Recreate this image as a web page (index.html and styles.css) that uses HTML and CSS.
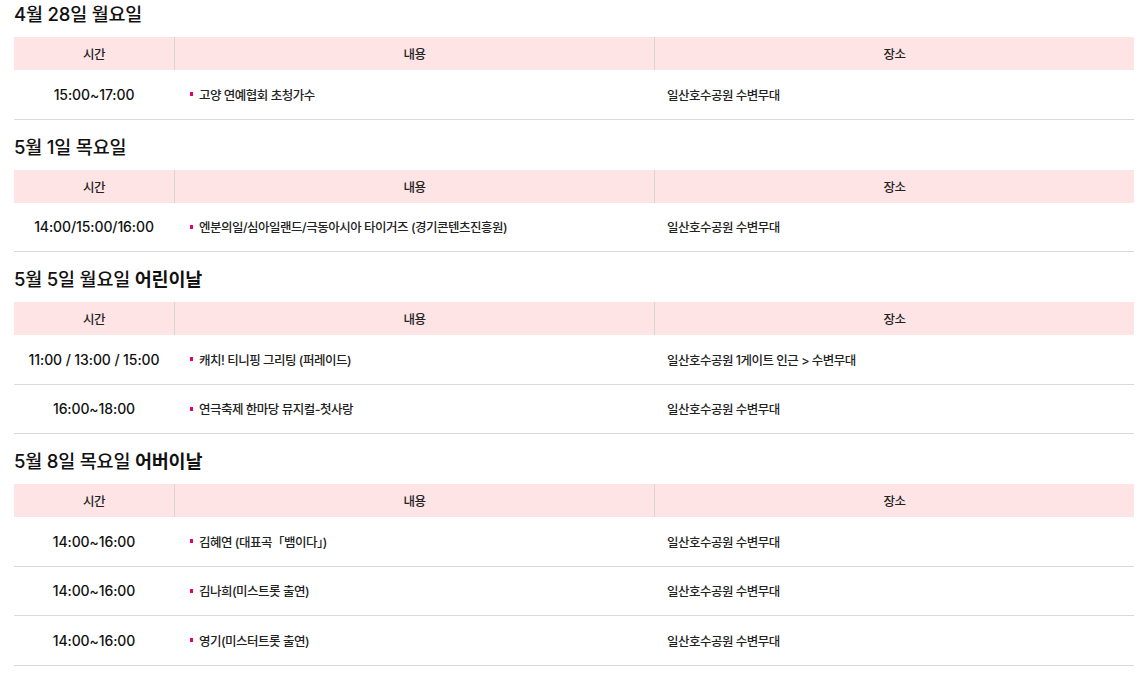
FILE: index.html
```html
<!DOCTYPE html>
<html lang="ko">
<head>
<meta charset="utf-8">
<title>일정</title>
<link rel="stylesheet" href="styles.css">
</head>
<body>
<div class="page">
  <section class="day">
    <h3 class="day-title">4월 28일 월요일</h3>
    <div class="sched">
      <div class="row head"><div class="c">시간</div><div class="c">내용</div><div class="c">장소</div></div>
      <div class="row"><div class="c time">15:00~17:00</div><div class="c what"><span class="dot"></span>고양 연예협회 초청가수</div><div class="c where">일산호수공원 수변무대</div></div>
    </div>
  </section>
  <section class="day">
    <h3 class="day-title">5월 1일 목요일</h3>
    <div class="sched">
      <div class="row head"><div class="c">시간</div><div class="c">내용</div><div class="c">장소</div></div>
      <div class="row"><div class="c time">14:00/15:00/16:00</div><div class="c what"><span class="dot"></span>엔분의일/심아일랜드/극동아시아 타이거즈 (경기콘텐츠진흥원)</div><div class="c where">일산호수공원 수변무대</div></div>
    </div>
  </section>
  <section class="day">
    <h3 class="day-title">5월 5일 월요일 <b>어린이날</b></h3>
    <div class="sched">
      <div class="row head"><div class="c">시간</div><div class="c">내용</div><div class="c">장소</div></div>
      <div class="row"><div class="c time">11:00 / 13:00 / 15:00</div><div class="c what"><span class="dot"></span>캐치! 티니핑 그리팅 (퍼레이드)</div><div class="c where">일산호수공원 1게이트 인근 &gt; 수변무대</div></div>
      <div class="row"><div class="c time">16:00~18:00</div><div class="c what"><span class="dot"></span>연극축제 한마당 뮤지컬-첫사랑</div><div class="c where">일산호수공원 수변무대</div></div>
    </div>
  </section>
  <section class="day">
    <h3 class="day-title">5월 8일 목요일 <b>어버이날</b></h3>
    <div class="sched">
      <div class="row head"><div class="c">시간</div><div class="c">내용</div><div class="c">장소</div></div>
      <div class="row"><div class="c time">14:00~16:00</div><div class="c what"><span class="dot"></span>김혜연 (대표곡「뱀이다」)</div><div class="c where">일산호수공원 수변무대</div></div>
      <div class="row"><div class="c time">14:00~16:00</div><div class="c what"><span class="dot"></span>김나희(미스트롯 출연)</div><div class="c where">일산호수공원 수변무대</div></div>
      <div class="row"><div class="c time">14:00~16:00</div><div class="c what"><span class="dot"></span>영기(미스터트롯 출연)</div><div class="c where">일산호수공원 수변무대</div></div>
    </div>
  </section>
</div>
</body>
</html>
```
FILE: styles.css
```css
* { box-sizing: border-box; }
html, body { margin: 0; padding: 0; background: #fff; }
body {
  font-family: Inter, "Noto Sans CJK KR", "Noto Sans", sans-serif;
  color: #111;
}
.page {
  padding: 0 11px 0 14px;
  display: flex;
  flex-direction: column;
  gap: 13px;
}
.day-title {
  margin: 0 0 11px;
  height: 26px;
  padding-top: 2px;
  line-height: 24px;
  font-size: 18.5px;
  font-weight: 500;
  letter-spacing: -0.2px;
  color: #111;
}
.day-title b { font-weight: 700; }
.sched { width: 1120px; }
.row {
  display: grid;
  grid-template-columns: 160px 480px 480px;
  height: 49.5px;
  border-bottom: 1px solid #d9d9d9;
}
.row.head {
  height: 33px;
  background: #fee4e5;
  border-bottom: 0;
}
.row.head .c {
  justify-content: center;
}
.row.head .c + .c { border-left: 1px solid #d6d6d6; }
.c {
  display: flex;
  align-items: center;
  font-size: 12.5px;
  font-weight: 500;
  letter-spacing: -0.5px;
  color: #222;
}
.time {
  justify-content: center;
  font-size: 14px;
  font-weight: 500;
  color: #111;
  letter-spacing: -0.1px;
}
.what { padding-left: 16px; }
.where { padding-left: 13px; }
.dot {
  width: 3px;
  height: 4px;
  background: #e5006e;
  margin-right: 6px;
  flex: none;
}
```
